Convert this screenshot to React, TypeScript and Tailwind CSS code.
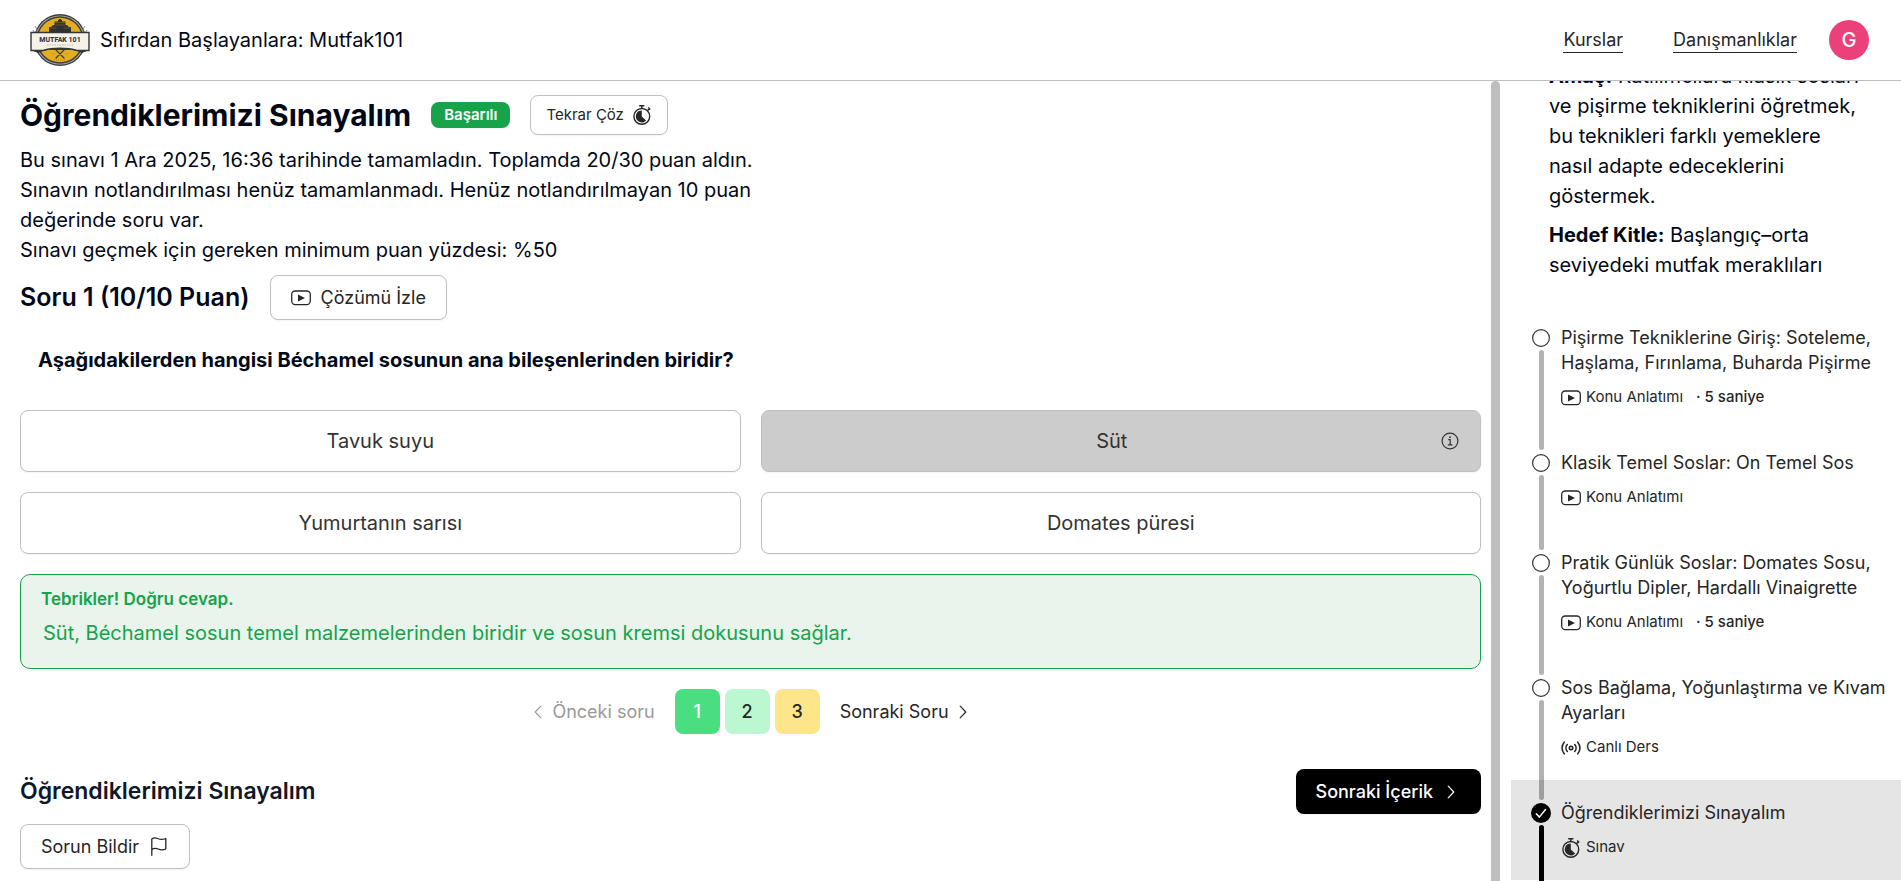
import type { ReactNode } from "react";

type IconProps = { className?: string };

function Logo() {
  return (
    <svg viewBox="0 0 60 52" className="h-[52px] w-[60px]" role="img" aria-label="Mutfak 101">
      <circle cx="30" cy="26" r="26" fill="#3b3d40" />
      <circle cx="30" cy="26" r="24.600" fill="#b9b5aa" />
      <circle cx="30" cy="26" r="23.800" fill="#3b3d40" />
      <circle cx="30" cy="26" r="22.300" fill="#e5ae22" />
      <path d="M5 12l2 3v4M3 16l2 4M55 12l-2 3v4M57 16l-2 4" stroke="#8c8c8c" strokeWidth="1" fill="none" />
      <path d="M19 18v-5h2.500c0-1.200 1-2 3-2V7.500h3l1.500-2.500h2l1.500 2.500h3V11c2 0 3 .8 3 2H41v5z" fill="#2e3034" />
      <path d="M25 8.500h10M19.500 14h7M33.500 14h7M25 11h10" stroke="#8a6c1d" strokeWidth="0.600" />
      <path d="M1 36h58l-7 3c-12-6-32-6-44 0z" fill="#34363a" />
      <path d="M1 18.500h58V36.500H47c-9-3-25-3-34 0H1z" fill="#f8f1e8" stroke="#34363a" strokeWidth="1.400" />
      <text
        x="30"
        y="28"
        textAnchor="middle"
        fontSize="7"
        fontWeight="800"
        fontFamily="Roboto, sans-serif"
        fill="#34363a"
      >
        MUTFAK 101
      </text>
      <path d="M17 31h26" stroke="#b5afa6" strokeWidth="0.800" strokeDasharray="1.500 1" />
      <path d="M26 36l8 8M34 36l-8 8" stroke="#3b3d40" strokeWidth="1.200" strokeLinecap="round" />
      <path d="M22 40h3M35 40h3M24 46h12" stroke="#a57c1a" strokeWidth="0.800" strokeDasharray="1 1" />
    </svg>
  );
}

function PlayIcon({ className }: IconProps) {
  return (
    <svg viewBox="0 0 20 20" className={className} fill="none" aria-hidden="true">
      <rect x="0.700" y="3" width="18.600" height="13.600" rx="3.500" stroke="currentColor" strokeWidth="1.300" />
      <path d="M7 6.500v7l7-3.500z" fill="currentColor" />
    </svg>
  );
}

function StopwatchIcon({ className }: IconProps) {
  return (
    <svg viewBox="0 0 20 20" className={className} fill="none" aria-hidden="true">
      <circle cx="9.800" cy="11.400" r="7.900" stroke="currentColor" strokeWidth="1.400" />
      <path d="M9.800 11.400V5.400a6 6 0 1 0 4.300 10.200z" fill="currentColor" />
      <path d="M7.200 0.800h5.200M9.800 0.800v2.800M15.400 5.700l2-2M16.200 2.600l2 2" stroke="currentColor" strokeWidth="1.400" />
    </svg>
  );
}

function LiveIcon({ className }: IconProps) {
  return (
    <svg viewBox="0 0 20 20" className={className} fill="none" stroke="currentColor" strokeWidth="1.600" strokeLinecap="round" aria-hidden="true">
      <circle cx="10" cy="10" r="1.700" />
      <path d="M6.300 13.500a5.200 5.200 0 0 1 0-7M13.700 6.500a5.200 5.200 0 0 1 0 7M3.200 15.800a9 9 0 0 1 0-11.600M16.800 4.200a9 9 0 0 1 0 11.600" />
    </svg>
  );
}

function InfoIcon({ className }: IconProps) {
  return (
    <svg viewBox="0 0 18 18" className={className} fill="none" stroke="currentColor" strokeWidth="1.200" aria-hidden="true">
      <circle cx="9" cy="9" r="7.900" />
      <path d="M7.200 7.700h2v5M6.800 12.900h4.600" />
      <circle cx="9" cy="5.200" r="0.900" fill="currentColor" stroke="none" />
    </svg>
  );
}

function FlagIcon({ className }: IconProps) {
  return (
    <svg viewBox="0 0 20 20" className={className} fill="none" stroke="currentColor" strokeWidth="1.300" strokeLinecap="round" strokeLinejoin="round" aria-hidden="true">
      <path d="M2.800 18.300V2C4.500.6 6.700.6 8.600 1.500c2.300 1.100 5.300 1.300 8.200 0V12c-2.600 1.200-5.400 1-7.600 0-2.200-.9-4.300-.9-6.400.4" />
    </svg>
  );
}

function ChevronLeft({ className }: IconProps) {
  return (
    <svg viewBox="0 0 20 20" className={className} fill="none" stroke="currentColor" strokeWidth="1.200" strokeLinecap="round" strokeLinejoin="round" aria-hidden="true">
      <path d="M12.800 4.200L7.200 10l5.600 5.800" />
    </svg>
  );
}

function ChevronRight({ className }: IconProps) {
  return (
    <svg viewBox="0 0 20 20" className={className} fill="none" stroke="currentColor" strokeWidth="1.200" strokeLinecap="round" strokeLinejoin="round" aria-hidden="true">
      <path d="M7.200 4.200l5.600 5.800-5.600 5.800" />
    </svg>
  );
}

function StepMark({ done }: { done?: boolean }) {
  return (
    <svg viewBox="0 0 20 20" className="h-5 w-5" fill="none" aria-hidden="true">
      {done ? (
        <>
          <circle cx="10" cy="10" r="10" fill="#000" />
          <path d="M5.300 10.800l3 3.300 6.200-7.600" stroke="#fff" strokeWidth="1.500" strokeLinecap="round" strokeLinejoin="round" />
        </>
      ) : (
        <circle cx="10" cy="10" r="8.400" fill="#fff" stroke="#333" strokeWidth="1.200" />
      )}
    </svg>
  );
}

const outline = "rounded-lg border border-[#bfbfbf] bg-white text-[#262626] shadow-xs";

function Option({ label, selected }: { label: string; selected?: boolean }) {
  return (
    <button
      type="button"
      aria-pressed={!!selected}
      className={
        selected
          ? "flex h-[62px] items-center rounded-lg border border-[#bfbfbf] bg-[#cccccc] px-[21px] text-xl text-[#333333] shadow-xs"
          : "flex h-[62px] items-center rounded-lg border border-[#bfbfbf] bg-white px-[21px] text-xl text-[#333333] shadow-xs"
      }
    >
      <span className="flex-1 text-center">{label}</span>
      {selected && <InfoIcon className="h-[18px] w-[18px]" />}
    </button>
  );
}

type Step = { title: string; kind: string; icon: ReactNode; duration?: string; done?: boolean };

const play = <PlayIcon className="h-5 w-5" />;

const steps: Step[] = [
  { title: "Pişirme Tekniklerine Giriş: Soteleme, Haşlama, Fırınlama, Buharda Pişirme", kind: "Konu Anlatımı", icon: play, duration: "5 saniye" },
  { title: "Klasik Temel Soslar: On Temel Sos", kind: "Konu Anlatımı", icon: play },
  { title: "Pratik Günlük Soslar: Domates Sosu, Yoğurtlu Dipler, Hardallı Vinaigrette", kind: "Konu Anlatımı", icon: play, duration: "5 saniye" },
  { title: "Sos Bağlama, Yoğunlaştırma ve Kıvam Ayarları", kind: "Canlı Ders", icon: <LiveIcon className="h-5 w-5" /> },
  { title: "Öğrendiklerimizi Sınayalım", kind: "Sınav", icon: <StopwatchIcon className="h-5 w-5" />, done: true },
];

function StepRow({ step }: { step: Step }) {
  return (
    <li className={step.done ? "relative bg-[#e5e5e5]" : "relative"}>
      <a href="#" className="flex gap-2.5 py-5 pr-3 pl-5 text-[#262626]">
        <span className="flex h-[25px] items-center">
          <StepMark done={step.done} />
        </span>
        <span className="flex flex-1 flex-col gap-2.5">
          <span className="text-lg leading-[25px]">{step.title}</span>
          <span className="flex h-[25px] items-center gap-[5px] text-[15px]">
            {step.icon}
            <span>{step.kind}</span>
            {step.duration && <span className="pl-2 font-medium">· {step.duration}</span>}
          </span>
        </span>
      </a>
      <span
        className={
          step.done
            ? "absolute top-[45px] -bottom-5 left-7 z-10 w-[5px] rounded-full bg-black"
            : "absolute top-[45px] -bottom-5 left-7 z-10 w-[5px] rounded-full bg-black/30"
        }
      />
    </li>
  );
}

export default function App() {
  return (
    <div className="flex h-screen flex-col overflow-hidden bg-white font-['Inter',sans-serif] text-[#020817]">
      <header className="flex h-[81px] shrink-0 items-center justify-between border-b border-[#bfbfbf] pr-8 pl-[30px]">
        <a href="#" className="flex items-center gap-2.5 text-xl">
          <Logo />
          <span>Sıfırdan Başlayanlara: Mutfak101</span>
        </a>
        <nav className="flex items-center text-lg text-[#262626]">
          <a href="#" className="mr-[50px] border-b border-[#262626] leading-6">Kurslar</a>
          <a href="#" className="mr-8 border-b border-[#262626] leading-6">Danışmanlıklar</a>
          <button type="button" aria-label="Hesap" className="h-10 w-10 rounded-full bg-[#ec407a] text-xl font-medium text-white">
            G
          </button>
        </nav>
      </header>

      <div className="flex min-h-0 flex-1">
        <main className="flex min-w-0 flex-1 flex-col overflow-hidden pt-3.5 pr-2.5 pl-5">
          <div className="flex h-10 items-center gap-5">
            <h1 className="text-3xl font-bold">Öğrendiklerimizi Sınayalım</h1>
            <span className="rounded-lg bg-[#16a34a] px-[13px] text-[15px] leading-[26px] font-semibold text-white shadow-xs">Başarılı</span>
            <button type="button" className={`${outline} flex h-10 items-center gap-2 px-[15px] text-[15px]`}>
              Tekrar Çöz
              <StopwatchIcon className="h-5 w-5" />
            </button>
          </div>

          <div className="mt-2.5 max-w-[750px] text-xl leading-[30px]">
            <p>
              Bu sınavı 1 Ara 2025, 16:36 tarihinde tamamladın. Toplamda 20/30 puan aldın. Sınavın notlandırılması henüz
              tamamlanmadı. Henüz notlandırılmayan 10 puan değerinde soru var.
            </p>
            <p>Sınavı geçmek için gereken minimum puan yüzdesi: %50</p>
          </div>

          <div className="mt-2.5 flex items-center gap-5">
            <h2 className="text-[25px] font-semibold">Soru 1 (10/10 Puan)</h2>
            <button type="button" className={`${outline} flex h-[45px] items-center gap-2.5 px-5 text-lg`}>
              <PlayIcon className="h-5 w-5" />
              Çözümü İzle
            </button>
          </div>

          <p className="mt-[25px] px-[18px] text-xl leading-[30px] font-bold">
            Aşağıdakilerden hangisi Béchamel sosunun ana bileşenlerinden biridir?
          </p>

          <div className="mt-[35px] grid grid-cols-2 gap-5">
            <Option label="Tavuk suyu" />
            <Option label="Süt" selected />
            <Option label="Yumurtanın sarısı" />
            <Option label="Domates püresi" />
          </div>

          <div role="status" className="mt-5 h-[95px] rounded-[10px] border border-[#16a34a] bg-[#e8f4ec] px-5 pt-3 text-[#16a34a]">
            <h3 className="text-[17px] leading-[25px] font-semibold">Tebrikler! Doğru cevap.</h3>
            <p className="mt-1.5 px-0.5 text-xl leading-[30px]">
              Süt, Béchamel sosun temel malzemelerinden biridir ve sosun kremsi dokusunu sağlar.
            </p>
          </div>

          <nav aria-label="Sorular" className="mt-5 flex h-[45px] items-center justify-center text-lg text-[#262626]">
            <button type="button" disabled className="mr-5 flex items-center gap-1 text-[#999999]">
              <ChevronLeft className="h-5 w-5" />
              Önceki soru
            </button>
            <span className="flex gap-[5px] font-medium">
              <button type="button" className="h-[45px] w-[45px] rounded-lg bg-[#4ade80] text-white">1</button>
              <button type="button" className="h-[45px] w-[45px] rounded-lg bg-[#bbf7d0]">2</button>
              <button type="button" className="h-[45px] w-[45px] rounded-lg bg-[#fde68a]">3</button>
            </span>
            <button type="button" className="ml-5 flex items-center gap-1">
              Sonraki Soru
              <ChevronRight className="h-5 w-5" />
            </button>
          </nav>

          <div className="mt-[35px] flex items-center justify-between">
            <h2 className="text-[23px] font-semibold text-[#0f172a]">Öğrendiklerimizi Sınayalım</h2>
            <button type="button" className="flex h-[45px] items-center gap-2 rounded-lg bg-black px-5 text-lg font-medium text-white shadow-xs">
              Sonraki İçerik
              <ChevronRight className="h-5 w-5" />
            </button>
          </div>
          <button type="button" className={`${outline} mt-2.5 flex h-[45px] items-center gap-2.5 self-start px-5 text-lg`}>
            Sorun Bildir
            <FlagIcon className="h-5 w-5" />
          </button>
        </main>

        <div className="w-[9px] shrink-0 rounded-t-full bg-[#bfbfbf]" />

        <aside className="ml-[11px] w-[390px] shrink-0 overflow-hidden">
          <div className="-mt-5 flex flex-col gap-[9px] pr-8 pl-[38px] text-xl leading-[30px]">
            <p>
              <strong className="font-bold">Amaç:</strong> Katılımcılara klasik sosları ve pişirme tekniklerini öğretmek, bu teknikleri farklı yemeklere nasıl adapte
              edeceklerini göstermek.
            </p>
            <p>
              <strong className="font-bold">Hedef Kitle:</strong> Başlangıç–orta seviyedeki mutfak meraklıları
            </p>
          </div>
          <ul className="mt-[25px]">
            {steps.map((step) => (
              <StepRow key={step.title} step={step} />
            ))}
          </ul>
        </aside>
      </div>
    </div>
  );
}
